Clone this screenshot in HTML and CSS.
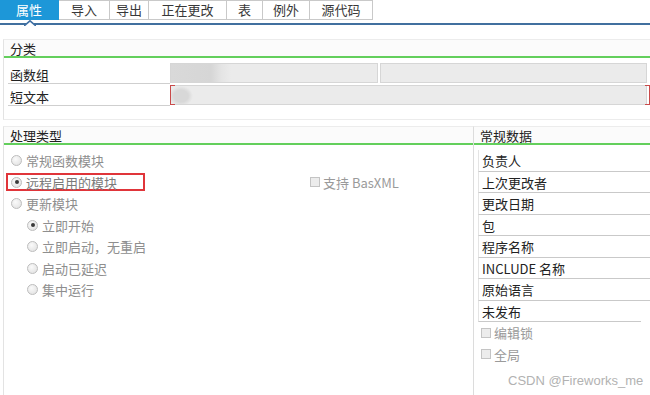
FILE: index.html
```html
<!DOCTYPE html>
<html lang="zh">
<head>
<meta charset="utf-8">
<link rel="stylesheet" href="styles.css">
</head>
<body>
<div class="tabbar">
  <div class="tab active t1">属性
    <svg class="caret" width="12" height="6" viewBox="0 0 12 6"><polyline points="0,6 6,0.8 12,6" fill="#fff" stroke="#3f6fa3" stroke-width="1.6"/></svg>
  </div>
  <div class="tab t2">导入</div>
  <div class="tab t3">导出</div>
  <div class="tab t4">正在更改</div>
  <div class="tab t5">表</div>
  <div class="tab t6">例外</div>
  <div class="tab t7">源代码</div>
</div>

<div class="box sec1">
  <div class="head">分类</div>
  <div class="rows">
    <div class="frow">
      <div class="flabel">函数组</div>
      <div class="field f1 blur"></div>
      <div class="field f2"></div>
    </div>
    <div class="frow">
      <div class="flabel">短文本</div>
      <div class="field f3 blur2 marked"></div>
    </div>
  </div>
</div>

<div class="sec2">
  <div class="box left">
    <div class="head">处理类型</div>
    <div class="opts">
      <div class="opt"><span class="radio"></span>常规函数模块</div>
      <div class="opt red-row">
        <span class="redbox"><span class="radio on"></span>远程启用的模块</span>
        <span class="chk-wrap"><span class="check"></span>支持 BasXML</span>
      </div>
      <div class="opt"><span class="radio"></span>更新模块</div>
      <div class="opt sub"><span class="radio on"></span>立即开始</div>
      <div class="opt sub"><span class="radio"></span>立即启动，无重启</div>
      <div class="opt sub"><span class="radio"></span>启动已延迟</div>
      <div class="opt sub"><span class="radio"></span>集中运行</div>
    </div>
  </div>
  <div class="box right">
    <div class="head">常规数据</div>
    <div class="dlist">
      <div class="drow">负责人</div>
      <div class="drow">上次更改者</div>
      <div class="drow">更改日期</div>
      <div class="drow">包</div>
      <div class="drow">程序名称</div>
      <div class="drow">INCLUDE 名称</div>
      <div class="drow">原始语言</div>
      <div class="drow short">未发布</div>
      <div class="crow"><span class="check"></span>编辑锁</div>
      <div class="crow"><span class="check"></span>全局</div>
    </div>
  </div>
</div>

<div class="watermark">CSDN @Fireworks_me</div>
</body>
</html>
```

FILE: styles.css
```css
* { box-sizing: border-box; }
html, body { margin: 0; padding: 0; }
body {
  width: 650px;
  height: 395px;
  overflow: hidden;
  background: #fff;
  font-family: "Noto Sans CJK SC", "Noto Sans", sans-serif;
  font-size: 13px;
  color: #2a2a2a;
  position: relative;
}

/* tabs */
.tabbar {
  display: flex;
  height: 25px;
  padding-bottom: 3px;
  border-bottom: 2px solid #41709f;
}
.tab {
  position: relative;
  height: 20px;
  line-height: 18px;
  text-align: center;
  border: 1px solid #c9c9c9;
  border-left: none;
  background: #fff;
  color: #383838;
  font-size: 13px;
}
.tab.active {
  background: #1d97d8;
  border-color: #1d97d8;
  color: #fff;
}
.caret { position: absolute; left: 24px; top: 19px; }
.t1 { width: 59px; }
.t2 { width: 51px; }
.t3 { width: 39px; }
.t4 { width: 78px; }
.t5 { width: 36px; }
.t6 { width: 47px; }
.t7 { width: 63px; }

/* boxes */
.box {
  border-left: 1px solid #e3e3e3;
  border-top: 1px solid #ececec;
  background: #fff;
}
.head {
  height: 18px;
  line-height: 17px;
  padding-left: 6px;
  background: #fbfbfb;
  border-bottom: 2px solid #63cf5c;
  font-size: 13px;
  color: #222;
}
.sec1 {
  margin: 14px 0 0 3px;
  height: 81px;
  border-bottom: 1px solid #ececec;
}
.rows { padding: 4px 3px 0 4px; }
.frow {
  display: flex;
  align-items: flex-start;
  height: 22px;
}
.flabel {
  width: 162px;
  height: 22px;
  line-height: 16px;
  padding: 5px 0 0 2px;
  border-bottom: 1px solid #cfcfcf;
  color: #222;
}
.field {
  position: relative;
  height: 20px;
  margin-top: 1px;
  background: #ebebeb;
  border: 1px solid #d6d6d6;
}
.f1 { width: 208px; }
.f2 { width: 267px; margin-left: 2px; }
.f3 { width: 477px; }
.blur { background: linear-gradient(to right, #d9d9d9 0, #d6d6d6 40px, #e4e4e4 50px, #ebebeb 60px); }
.blur2 { background: radial-gradient(ellipse 12px 10px at 10px 10px, #d8d8d8 60%, #ebebeb 100%); }
.marked::before,
.marked::after {
  content: "";
  position: absolute;
  top: -1px;
  bottom: -1px;
  width: 4px;
  border-top: 1.5px solid #c94a4a;
  border-bottom: 1.5px solid #c94a4a;
}
.marked::before { left: -1px; border-left: 1.5px solid #c94a4a; }
.marked::after { right: -4px; border-right: 1.5px solid #c94a4a; }

/* section 2 */
.sec2 {
  display: flex;
  margin: 6px 0 0 3px;
  height: 270px;
}
.left { width: 470px; }
.right { flex: 1; border-left: 1px solid #dcdcdc; }
.opts { padding-top: 5px; }
.opt {
  display: flex;
  align-items: center;
  height: 21.5px;
  padding-left: 7px;
  color: #8e8e8e;
}
.opt.sub { padding-left: 23px; }
.red-row { padding-left: 2px; }
.redbox {
  display: flex;
  align-items: center;
  width: 139px;
  height: 18px;
  padding-left: 3px;
  border: 2px solid #e0353a;
  color: #7a7a7a;
}
.chk-wrap {
  display: flex;
  align-items: center;
  margin-left: 165px;
  color: #9a9a9a;
}
.radio {
  display: inline-block;
  position: relative;
  width: 11px;
  height: 11px;
  margin-right: 4px;
  border-radius: 50%;
  border: 1px solid #bdbdbd;
  background: radial-gradient(circle at 40% 35%, #fafafa, #dedede);
  flex: none;
}
.radio.on::after {
  content: "";
  position: absolute;
  left: 2.5px;
  top: 2.5px;
  width: 4px;
  height: 4px;
  border-radius: 50%;
  background: #3a3a3a;
}
.check {
  display: inline-block;
  width: 10px;
  height: 10px;
  margin-right: 3px;
  border: 1px solid #c4c4c4;
  background: #ececec;
  flex: none;
}

.dlist { padding: 5px 0 0 4px; }
.drow {
  height: 21.5px;
  line-height: 21px;
  padding-left: 3px;
  border-left: 1px solid #e4e4e4;
  border-bottom: 1px solid #c9c9c9;
  color: #222;
}
.drow.short { margin-right: 9px; }
.crow {
  display: flex;
  align-items: center;
  height: 21.5px;
  padding-left: 3px;
  color: #9a9a9a;
}

.watermark {
  position: absolute;
  left: 508px;
  top: 373px;
  font-family: "Liberation Sans", Arial, sans-serif;
  font-size: 13px;
  color: #b2b2b2;
}
```
